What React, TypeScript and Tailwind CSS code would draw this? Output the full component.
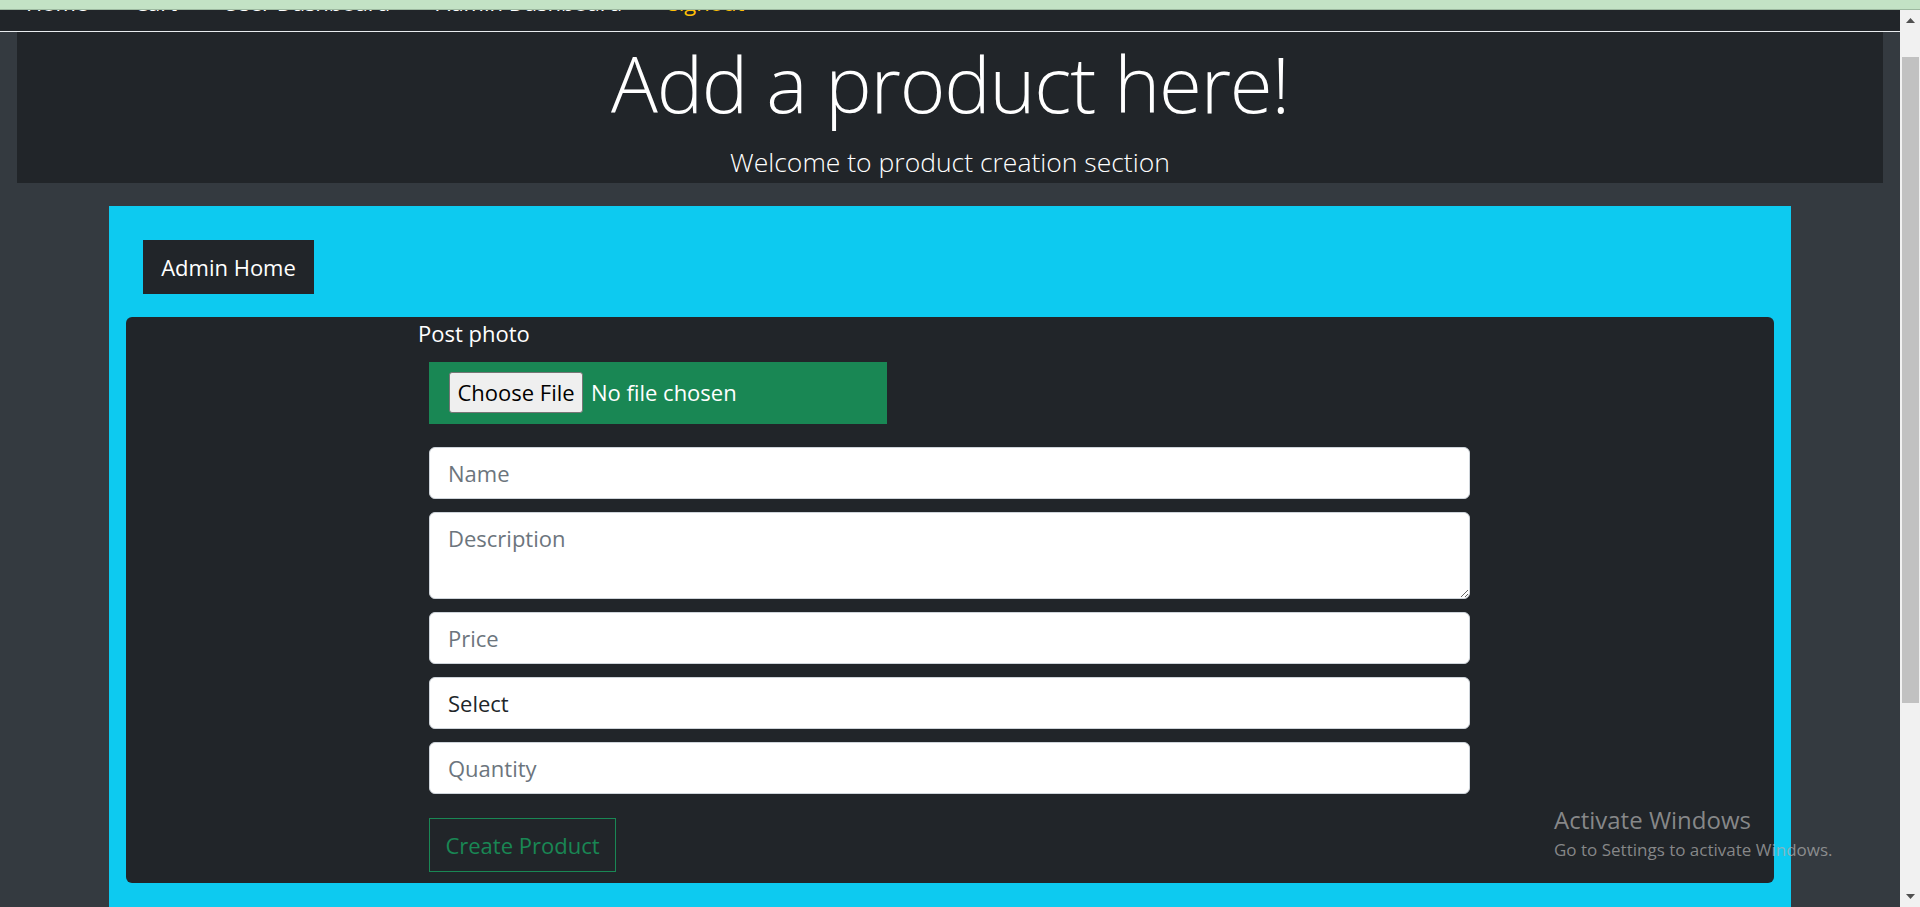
const font = { fontFamily: '"Open Sans", "Noto Sans", sans-serif' };

const navItems = ["Home", "Cart", "User Dashboard", "Admin Dashboard"];

function Field({ placeholder }: { placeholder: string }) {
  return (
    <input
      type="text"
      placeholder={placeholder}
      className="ml-[303px] mt-[13px] h-[52px] w-[1041px] rounded-[6px] border border-[#ced4da] bg-white pl-[18px] text-[22px] leading-[33px] text-[#212529] outline-none placeholder:text-[#6c757d]"
    />
  );
}

function Scrollbar() {
  return (
    <div className="flex h-full w-[20px] flex-col bg-[#f1f1f1]">
      <div className="flex h-[21px] items-center justify-center">
        <svg width="9" height="5" viewBox="0 0 9 5" aria-hidden>
          <path d="M4.5 0L9 5H0z" fill="#505050" />
        </svg>
      </div>
      <div className="h-[26px]" />
      <div className="ml-[2px] mr-[1px] h-[646px] bg-[#c1c1c1]" />
      <div className="flex-1" />
      <div className="flex h-[21px] items-center justify-center">
        <svg width="9" height="5" viewBox="0 0 9 5" aria-hidden>
          <path d="M0 0h9L4.5 5z" fill="#505050" />
        </svg>
      </div>
    </div>
  );
}

export default function App() {
  return (
    <div className="relative flex h-[907px] w-[1920px] flex-col overflow-hidden" style={font}>
      <div className="h-[10px] border-b border-[#9db8a0] bg-[#c3e2c5]" />

      <div className="flex h-[897px]">
        <div className="flex w-[1900px] flex-col overflow-hidden bg-[#343a40]">
          {/* navbar, scrolled mostly out of view */}
          <nav className="h-[22px] overflow-hidden border-b border-[#e9ecef] bg-[#212529]">
            <ul className="-mt-[24px] flex text-[22px] leading-[33px]">
              {navItems.map((item) => (
                <li key={item} className="px-[23px] text-white first:pl-[26px]">
                  {item}
                </li>
              ))}
              <li className="px-[23px] text-[#ffc107]">signout</li>
            </ul>
          </nav>

          <header className="mx-[17px] flex h-[151px] flex-col items-center bg-[#212529] pt-[12px] text-white">
            <h1 className="text-[78px] font-light leading-none tracking-[-1.2px]">Add a product here!</h1>
            <p className="mt-[27px] text-[26.5px] font-light leading-none">
              Welcome to product creation section
            </p>
          </header>

          <div className="mx-[109px] mt-[23px] flex-1 bg-[#0dcaf0] px-[17px] pt-[34px]">
            <button
              type="button"
              className="ml-[17px] h-[54px] w-[171px] bg-[#212529] text-[22px] leading-[33px] text-white"
            >
              Admin Home
            </button>

            <div className="mt-[23px] flex flex-col rounded-[6px] bg-[#212529] pb-[11px]">
              <label className="ml-[292px] text-[22px] leading-[33px] text-white">Post photo</label>

              <div className="ml-[303px] mt-[12px] flex h-[62px] w-[458px] items-start bg-[#198754] pl-[20px] pt-[10px]">
                <span className="flex h-[41px] w-[134px] items-center justify-center rounded-[3px] border border-[#767676] bg-[#efefef] text-[22px] leading-[33px] text-black">
                  Choose File
                </span>
                <span className="ml-[8px] mt-[4px] text-[22px] leading-[33px] text-white">
                  No file chosen
                </span>
              </div>

              <input
                type="text"
                placeholder="Name"
                className="ml-[303px] mt-[23px] h-[52px] w-[1041px] rounded-[6px] border border-[#ced4da] bg-white pl-[18px] text-[22px] leading-[33px] text-[#212529] outline-none placeholder:text-[#6c757d]"
              />
              <textarea
                placeholder="Description"
                className="ml-[303px] mt-[13px] h-[87px] w-[1041px] rounded-[6px] border border-[#ced4da] bg-white pl-[18px] pt-[9px] text-[22px] leading-[33px] text-[#212529] outline-none placeholder:text-[#6c757d]"
              />
              <Field placeholder="Price" />
              <select className="ml-[303px] mt-[13px] h-[52px] w-[1041px] appearance-none rounded-[6px] border border-[#ced4da] bg-white pl-[18px] text-[22px] leading-[33px] text-[#212529] outline-none">
                <option>Select</option>
              </select>
              <Field placeholder="Quantity" />

              <button
                type="button"
                className="ml-[303px] mt-[24px] h-[54px] w-[187px] border border-[#198754] text-[22px] leading-[33px] text-[#198754]"
              >
                Create Product
              </button>
            </div>
          </div>
        </div>

        <Scrollbar />
      </div>

      {/* windows activation watermark */}
      <div className="pointer-events-none absolute left-[1554px] top-[808px] text-[rgba(175,175,175,0.72)]">
        <p className="text-[24px] leading-none">Activate Windows</p>
        <p className="mt-[9px] text-[17px] leading-none">Go to Settings to activate Windows.</p>
      </div>
    </div>
  );
}
